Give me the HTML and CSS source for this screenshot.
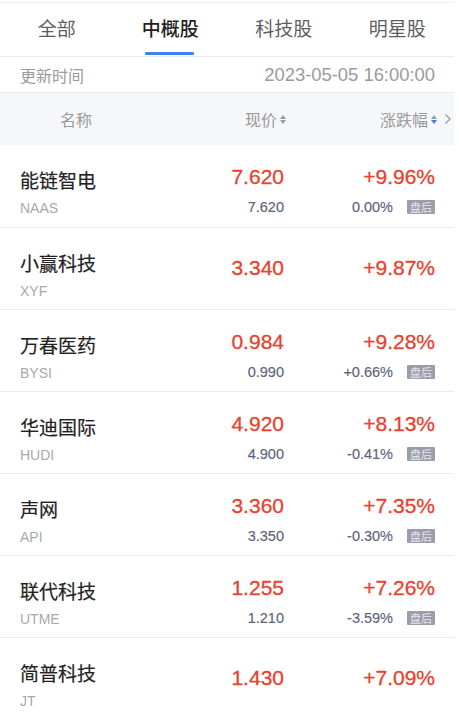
FILE: index.html
```html
<!DOCTYPE html>
<html lang="zh">
<head>
<meta charset="utf-8">
<link rel="stylesheet" href="styles.css">
</head>
<body>
<div class="page">
  <nav class="tabs">
    <div class="tab">全部</div>
    <div class="tab active">中概股</div>
    <div class="tab">科技股</div>
    <div class="tab">明星股</div>
  </nav>
  <div class="update">
    <span class="update-label">更新时间</span>
    <span class="update-time">2023-05-05 16:00:00</span>
  </div>
  <div class="thead">
    <div class="th th-name">名称</div>
    <div class="th th-right">现价<span class="sort"><i class="up"></i><i class="down"></i></span></div>
    <div class="th th-right">涨跌幅<span class="sort"><i class="up"></i><i class="down on"></i></span></div>
    <div class="th th-more"><svg width="8" height="12" viewBox="0 0 8 12"><path d="M1.5 1.5 L6 6 L1.5 10.5" fill="none" stroke="#9a9ca4" stroke-width="1.3"/></svg></div>
  </div>
  <div class="list">
    <div class="row has-sub">
      <div class="name"><div class="cn">能链智电</div><div class="code">NAAS</div></div>
      <div class="cell"><div class="main">7.620</div><div class="sub">7.620</div></div>
      <div class="cell"><div class="main">+9.96%</div><div class="sub">0.00%<span class="badge">盘后</span></div></div>
    </div>
    <div class="row">
      <div class="name"><div class="cn">小赢科技</div><div class="code">XYF</div></div>
      <div class="cell"><div class="main">3.340</div></div>
      <div class="cell"><div class="main">+9.87%</div></div>
    </div>
    <div class="row has-sub">
      <div class="name"><div class="cn">万春医药</div><div class="code">BYSI</div></div>
      <div class="cell"><div class="main">0.984</div><div class="sub">0.990</div></div>
      <div class="cell"><div class="main">+9.28%</div><div class="sub">+0.66%<span class="badge">盘后</span></div></div>
    </div>
    <div class="row has-sub">
      <div class="name"><div class="cn">华迪国际</div><div class="code">HUDI</div></div>
      <div class="cell"><div class="main">4.920</div><div class="sub">4.900</div></div>
      <div class="cell"><div class="main">+8.13%</div><div class="sub">-0.41%<span class="badge">盘后</span></div></div>
    </div>
    <div class="row has-sub">
      <div class="name"><div class="cn">声网</div><div class="code">API</div></div>
      <div class="cell"><div class="main">3.360</div><div class="sub">3.350</div></div>
      <div class="cell"><div class="main">+7.35%</div><div class="sub">-0.30%<span class="badge">盘后</span></div></div>
    </div>
    <div class="row has-sub">
      <div class="name"><div class="cn">联代科技</div><div class="code">UTME</div></div>
      <div class="cell"><div class="main">1.255</div><div class="sub">1.210</div></div>
      <div class="cell"><div class="main">+7.26%</div><div class="sub">-3.59%<span class="badge">盘后</span></div></div>
    </div>
    <div class="row">
      <div class="name"><div class="cn">简普科技</div><div class="code">JT</div></div>
      <div class="cell"><div class="main">1.430</div></div>
      <div class="cell"><div class="main">+7.09%</div></div>
    </div>
  </div>
</div>
</body>
</html>
```
FILE: styles.css
```css
* { box-sizing: border-box; margin: 0; padding: 0; }
html, body { background: #fff; }
body {
  font-family: "Liberation Sans", "Noto Sans CJK SC", sans-serif;
  overflow: hidden;
}
.page {
  width: 454px;
  margin-top: 2px;
  border-top: 1px solid #f0f0f2;
}
.tabs {
  display: grid;
  grid-template-columns: repeat(4, 1fr);
  height: 54px;
  border-bottom: 1px solid #ececee;
}
.tab {
  position: relative;
  text-align: center;
  font-family: "Noto Sans CJK SC", sans-serif;
  font-size: 19px;
  line-height: 26px;
  padding-top: 12px;
  color: #5e5e62;
}
.tab.active { color: #1f1f1f; font-weight: 500; }
.tab.active::after {
  content: "";
  position: absolute;
  left: 50%;
  top: 49px;
  width: 49px;
  height: 3px;
  margin-left: -25px;
  background: #4183ea;
  border-radius: 1px;
}
.update {
  display: flex;
  justify-content: space-between;
  align-items: center;
  height: 36px;
  padding: 0 19px 0 20px;
  border-bottom: 1px solid #ececee;
  color: #9a9a9e;
}
.update-label { font-family: "Noto Sans CJK SC", sans-serif; font-size: 16px; }
.update-time { font-size: 18.4px; }
.thead {
  display: grid;
  grid-template-columns: 1fr 110px 151px 17px;
  align-items: center;
  height: 52px;
  padding-right: 2px;
  background: #f6f7fb;
  color: #999;
  font-family: "Noto Sans CJK SC", sans-serif;
  font-size: 16px;
}
.th-name { padding-left: 60px; }
.th-right { display: flex; justify-content: flex-end; align-items: center; margin-right: -2px; }
.th-more { display: flex; justify-content: flex-end; align-items: center; }
.sort {
  display: inline-flex;
  flex-direction: column;
  gap: 1px;
  margin-left: 3px;
}
.sort i {
  display: block;
  width: 0; height: 0;
  border-left: 3.5px solid transparent;
  border-right: 3.5px solid transparent;
}
.sort .up { border-bottom: 4px solid #9a9ca4; }
.sort .down { border-top: 4px solid #9a9ca4; }
.sort .down.on { border-top-color: #3d7de6; }
.row {
  display: grid;
  grid-template-columns: 1fr 110px 151px;
  height: 82px;
  padding: 0 19px 0 20px;
  border-bottom: 1px solid #ededef;
}
.row:first-child { height: 83px; }
.row:last-child { border-bottom: none; }
.name { padding-top: 23px; }
.cn {
  font-family: "Noto Sans CJK SC", sans-serif;
  font-size: 19px;
  line-height: 24px;
  color: #222;
  -webkit-text-stroke: 0.2px #222;
}
.code {
  margin-top: 8px;
  font-size: 14px;
  line-height: 16px;
  color: #a8a8ac;
}
.cell {
  display: flex;
  flex-direction: column;
  align-items: flex-end;
  justify-content: center;
  padding-bottom: 2px;
}
.row.has-sub .cell { justify-content: flex-start; padding-top: 20px; padding-bottom: 0; }
.main {
  font-size: 21px;
  line-height: 24px;
  color: #e8412f;
  -webkit-text-stroke: 0.3px #e8412f;
}
.sub {
  display: flex;
  align-items: center;
  margin-top: 9px;
  font-size: 14.5px;
  line-height: 18px;
  color: #5b6478;
  -webkit-text-stroke: 0.15px #5b6478;
}
.badge {
  display: inline-block;
  width: 28px;
  height: 14px;
  margin-left: 14px;
  background: #9c9dab;
  color: #e6e6ee;
  font-family: "Noto Sans CJK SC", sans-serif;
  font-size: 11px;
  line-height: 14px;
  text-align: center;
  border-radius: 1px;
  -webkit-text-stroke: 0;
}
```
